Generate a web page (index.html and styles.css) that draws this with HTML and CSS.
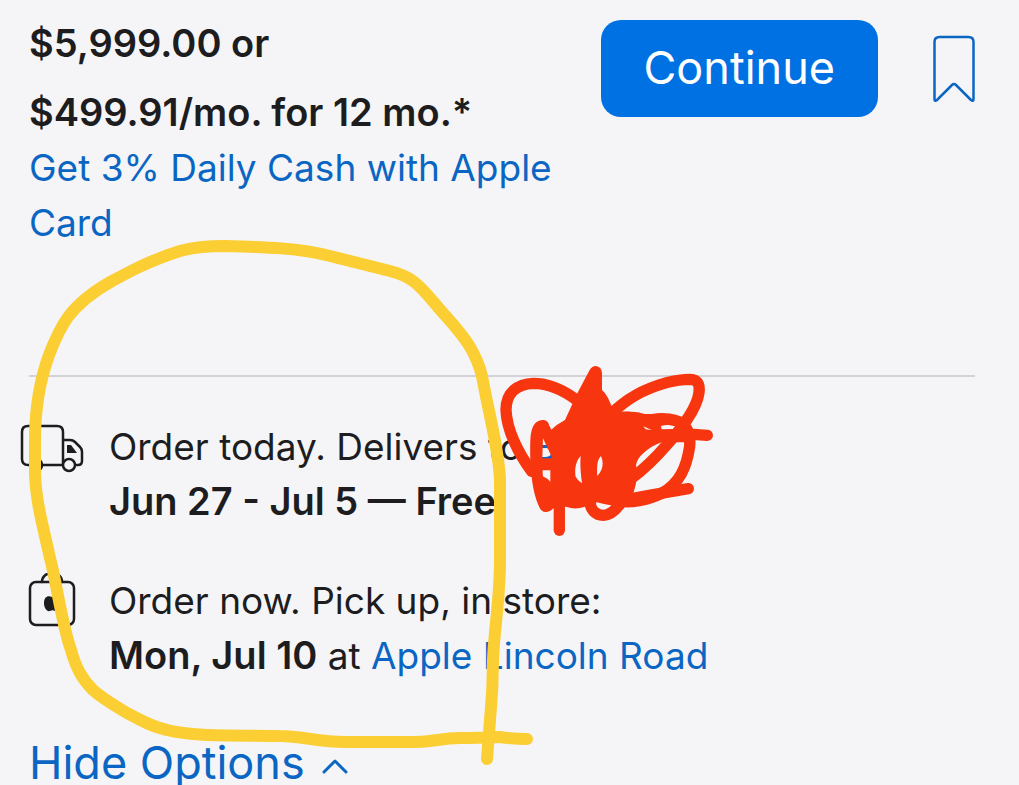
FILE: index.html
```
<!DOCTYPE html>
<html lang="en">

<head>
  <meta charset="UTF-8" />
  <meta name="viewport" content="width=device-width, initial-scale=1.0" />
  <title>Order Summary</title>
  <link rel="stylesheet" href="styles.css">
</head>

<body>
  <main class="summary">
    <header class="summary-header">
      <div class="price">
        <p class="price-full">$5,999.00 or</p>
        <p class="price-monthly">$499.91/mo. for 12 mo.*</p>
        <a href="#">Get 3% Daily Cash with Apple Card</a>
      </div>
      <div class="actions">
        <button class="continue-btn" type="button">Continue</button>
        <button class="save-btn" type="button" aria-label="Save for later">
          <svg width="42" height="68" viewBox="0 0 42 68">
            <path d="M1.5 64V7Q1.5 2 6.500 2H35.500Q40.500 2 40.500 7V64Q40.500 67 38 65L23 50Q21 48 19 50L4 65Q1.500 67 1.500 64Z" />
          </svg>
        </button>
      </div>
    </header>

    <section class="options">
      <div class="option">
        <svg class="option-icon" width="64" height="54" viewBox="0 0 64 54">
          <path d="M11 46H8Q2 46 2 40V13Q2 7 8 7H37Q43 7 43 13V46H23M43 21H50Q53 21 55 23L60 28Q62 30 62 33V42Q62 46 58 46H56" />
          <circle cx="16" cy="46" r="6" />
          <circle cx="49" cy="46" r="6" />
          <path class="solid" d="M47 26H51L57 34H47Z" />
        </svg>
        <div class="option-text">
          <p>Order today. Delivers to <a href="#">B</a></p>
          <p><strong>Jun 27 - Jul 5 — Free</strong></p>
        </div>
      </div>
      <div class="option">
        <svg class="option-icon" width="64" height="54" viewBox="0 0 64 54">
          <rect x="10" y="9" width="44" height="43" rx="6" />
          <path d="M22 9C22-3 42-3 42 9" />
          <path class="solid" d="M32 24C27 22 24 25 24 30C24 35 27 39 30 38C32 37 33 37 35 38C36 38 37 35 37 31C36 29 36 27 37 25C36 23 34 23 32 24Z" />
        </svg>
        <div class="option-text">
          <p>Order now. Pick up, in store:</p>
          <p><strong>Mon, Jul 10</strong> at <a href="#">Apple Lincoln Road</a></p>
        </div>
      </div>
    </section>

    <button class="toggle-btn" type="button">
      Hide Options
      <svg width="26" height="16" viewBox="0 0 26 16">
        <path d="M2 14L13 3L24 14" />
      </svg>
    </button>
  </main>

  <!-- marker drawing on top of the page -->
  <svg class="marker" width="1019" height="785" viewBox="0 0 1019 785" aria-hidden="true">
    <path class="yellow" d="M487 759L490 720C492 700 493 680 493 660C494 630 500 600 500 560V480C499 450 489 415 482 376C479 364 476 357 470 347C463 335 453 324 443 313C433 302 424 289 413 281C406 276 398 273 390 271L330 256C300 248 265 247 225 246C208 246 194 247 180 251C164 256 149 262 133 270L112 281C96 290 80 301 68 317C60 328 54 342 49 355C40 380 35 410 35 440V470C35 500 44 530 50 558C57 585 62 625 71 650C76 668 82 679 93 690C103 699 114 705 127 713C140 720 152 727 167 730C195 737 235 735 280 736C300 736 320 742 345 742H415C435 742 440 738 460 738C475 738 490 737 500 737Q513 739 527 739" />
    <g class="red" transform="translate(480 350) scale(.3333)">
      <path d="M290 150C250 120 210 100 160 100C115 102 78 125 78 180C80 240 115 310 155 364" />
      <path d="M390 195C440 145 490 118 560 98C590 90 620 88 630 88C655 89 660 105 657 128C650 180 600 240 560 285C530 320 495 355 455 385" />
      <path d="M430 202C500 200 470 215 530 207C600 202 635 225 629 290C620 350 600 400 545 430C500 452 450 458 425 454" />
      <path d="M610 253H640L682 256" />
      <path d="M625 416L520 434L430 450" />
      <path d="M190 227C164 226 167 280 168 330C170 380 175 430 195 468" />
      <path d="M238 541V450" />
      <path d="M332 455C328 475 345 496 370 496C395 495 412 475 425 455" />
      <path class="fill" fill-rule="evenodd" d="M329 60Q336 48 348 48Q364 50 366 68V120Q385 135 400 185L450 185L500 198H560L629 253V277H545Q515 287 490 310Q472 325 468 346L475 375Q468 390 467 405Q460 440 435 470Q400 470 347 456L330 470H315Q285 481 258 470L220 475Q207 490 190 484L160 400L165 340L190 211Q205 217 214 239Q230 223 255 210L292 130ZM189 265L217 325H187ZM187 361H211V395Q203 385 187 378ZM302 318C285 335 284 365 287 380Q293 392 306 400Q299 350 302 318ZM363 318C351 330 350 350 352 378Q377 350 363 318ZM490 229L515 240L497 238ZM543 228Q575 220 604 236L545 238Z" />
    </g>
  </svg>
</body>

</html>
```
FILE: styles.css
```
:root {
  --bg-color: #f5f5f7;
  --text-color: #1d1d1f;
  --link-color: #0b66c3;
  --btn-color: #0071e3;
  --line-color: #d2d2d7;
}

* {
  box-sizing: border-box;
}

body {
  position: relative;
  margin: 0;
  font-family: Inter, sans-serif;
  font-size: 37px;
  line-height: 55px;
  background-color: var(--bg-color);
  color: var(--text-color);
}

p {
  margin: 0;
}

a {
  color: var(--link-color);
  text-decoration: none;
}

strong {
  font-size: 38px;
  font-weight: 600;
}

button {
  padding: 0;
  border: none;
  background: none;
  font-family: inherit;
  cursor: pointer;
}

svg {
  display: block;
  fill: none;
  stroke: currentColor;
  stroke-linecap: round;
  stroke-linejoin: round;
}

.summary {
  padding: 16px 44px 0 29px;
}

.summary-header {
  display: flex;
  justify-content: space-between;
  gap: 24px;
  padding-bottom: 125px;
  border-bottom: 2px solid var(--line-color);
}

.price {
  flex: 1;
}

.price-full,
.price-monthly {
  font-size: 38px;
  font-weight: 600;
}

.price-full {
  margin-bottom: 14px;
}

.actions {
  display: flex;
  align-items: center;
  align-self: flex-start;
  gap: 55px;
  padding-top: 4px;
}

.continue-btn {
  padding: 19px 43px 21px;
  border-radius: 20px;
  background-color: var(--btn-color);
  color: #ffffff;
  font-size: 45px;
  line-height: 57px;
}

.save-btn,
.toggle-btn {
  color: var(--link-color);
}

.save-btn svg {
  stroke-width: 2.500;
}

.options {
  display: flex;
  flex-direction: column;
  gap: 44px;
  padding: 42px 0 54px;
}

.option {
  display: flex;
  gap: 25px;
  margin-left: -9px;
}

.option-icon {
  flex-shrink: 0;
  stroke-width: 2.500;
}

.option-icon circle {
  fill: var(--bg-color);
}

.option-icon .solid {
  fill: currentColor;
  stroke: none;
}

.toggle-btn {
  display: flex;
  align-items: center;
  gap: 17px;
  font-size: 45px;
  line-height: 52px;
}

.toggle-btn svg {
  margin-top: 6px;
  stroke-width: 3;
}

.marker {
  position: absolute;
  top: 0;
  left: 0;
  pointer-events: none;
}

.yellow {
  stroke: #fbce34;
  stroke-width: 12;
}

.red {
  stroke: #f73610;
  stroke-width: 34;
}

.red .fill {
  fill: #f73610;
  stroke: none;
}
```
